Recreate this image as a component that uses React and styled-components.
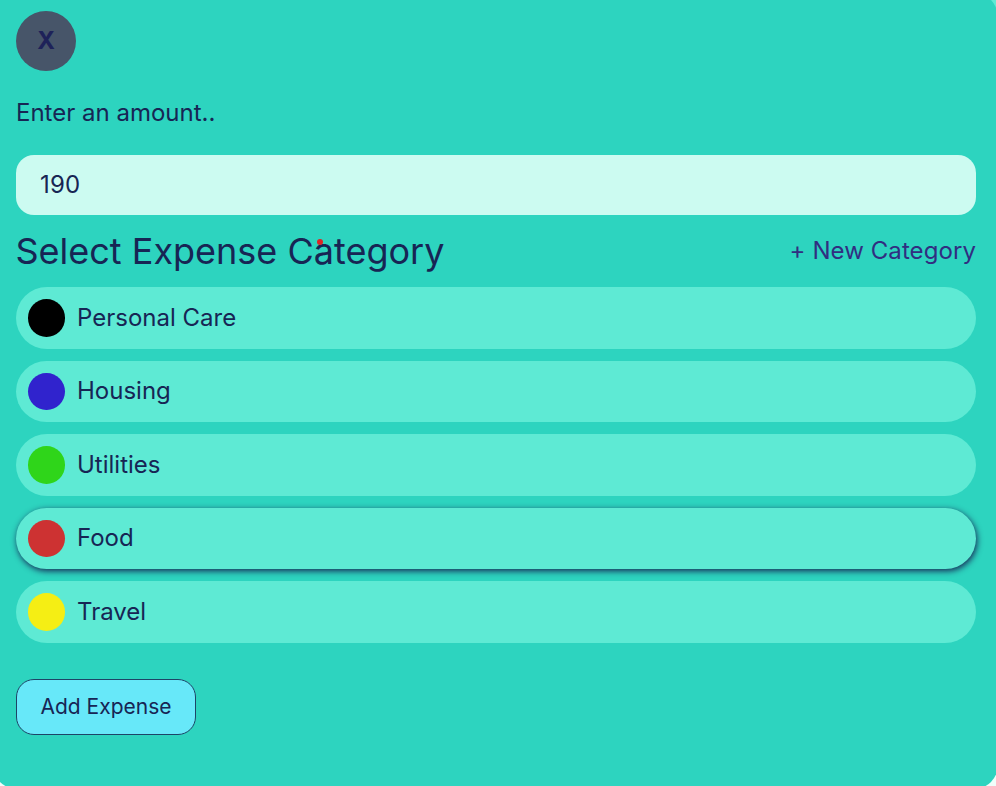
import React from "react";
import styled, { createGlobalStyle } from "styled-components";

const GlobalStyle = createGlobalStyle`
  *, *::before, *::after { box-sizing: border-box; }
  body { margin: 0; background: #f0fdfa; font-family: Inter, sans-serif; }
  button, input { font: inherit; letter-spacing: inherit; color: inherit; }
`;

const Page = styled.div`
  width: 100vw;
  height: 100vh;
  overflow: hidden;
  background: linear-gradient(#5eead4 0 50%, #f0fdfa 50%);
`;

const Panel = styled.main`
  display: flex;
  flex-direction: column;
  align-items: stretch;
  width: 1005px;
  height: 796px;
  margin: -7px 0 0 -7px;
  padding: 18px 22px 0 23px;
  border-radius: 24px;
  background: #2dd4bf;
  color: #172554;
  font-size: 24px;
  font-weight: 400;
  line-height: 36px;
`;

const CloseButton = styled.button`
  width: 60px;
  height: 60px;
  padding: 0;
  border: 0;
  border-radius: 50%;
  background: #475569;
  color: #1e2259;
  font-weight: 700;
`;

const AmountLabel = styled.label`
  margin-top: 24px;
`;

const AmountInput = styled.input`
  height: 60px;
  margin-top: 24px;
  padding: 0 24px 1px;
  border: 0;
  border-radius: 18px;
  outline: 0;
  background: #ccfbf1;
  letter-spacing: 0.2px;
`;

const CategoryHeader = styled.div`
  display: flex;
  align-items: center;
  justify-content: space-between;
  height: 72px;
`;

const Title = styled.h2`
  position: relative;
  margin: 0 0 0 -0.5px;
  font-size: 36px;
  font-weight: inherit;
  line-height: 54px;
`;

const Marker = styled.span`
  position: absolute;
  top: 15px;
  left: 301px;
  width: 6px;
  height: 6px;
  border-radius: 50%;
  background: #dc2626;
`;

const NewCategory = styled.button`
  padding: 0;
  border: 0;
  background: transparent;
  color: #312e81;
  letter-spacing: 0.08px;
`;

const CategoryList = styled.div`
  display: flex;
  flex-direction: column;
  gap: 12px;
`;

const CategoryRow = styled.button`
  display: flex;
  align-items: center;
  gap: 12px;
  height: 61.5px;
  padding: 12px;
  border: 0;
  border-radius: 31px;
  background: #5eead4;
  text-align: left;
  box-shadow: ${({ $selected }) => ($selected ? "1px 2px 6px #172554" : "none")};
`;

const Swatch = styled.span`
  width: 37px;
  height: 37.5px;
  border-radius: 50%;
  background: ${({ $color }) => $color};
`;

const AddButton = styled.button`
  align-self: flex-start;
  width: 180px;
  height: 56px;
  margin-top: 36px;
  padding: 0;
  border: 1px solid #1d4467;
  border-radius: 18px;
  background: #67e8f9;
  font-size: 21px;
`;

const categories = [
  { name: "Personal Care", color: "#000000" },
  { name: "Housing", color: "#3023cd" },
  { name: "Utilities", color: "#2fd51a" },
  { name: "Food", color: "#cd3232" },
  { name: "Travel", color: "#f5ee14" },
];

export default function App() {
  return (
    <Page>
      <GlobalStyle />
      <Panel>
        <CloseButton>X</CloseButton>
        <AmountLabel htmlFor="amount">Enter an amount..</AmountLabel>
        <AmountInput id="amount" defaultValue="190" />
        <CategoryHeader>
          <Title>
            Select Expense Category
            <Marker />
          </Title>
          <NewCategory>+ New Category</NewCategory>
        </CategoryHeader>
        <CategoryList>
          {categories.map(({ name, color }) => (
            <CategoryRow key={name} $selected={name === "Food"}>
              <Swatch $color={color} />
              {name}
            </CategoryRow>
          ))}
        </CategoryList>
        <AddButton>Add Expense</AddButton>
      </Panel>
    </Page>
  );
}
